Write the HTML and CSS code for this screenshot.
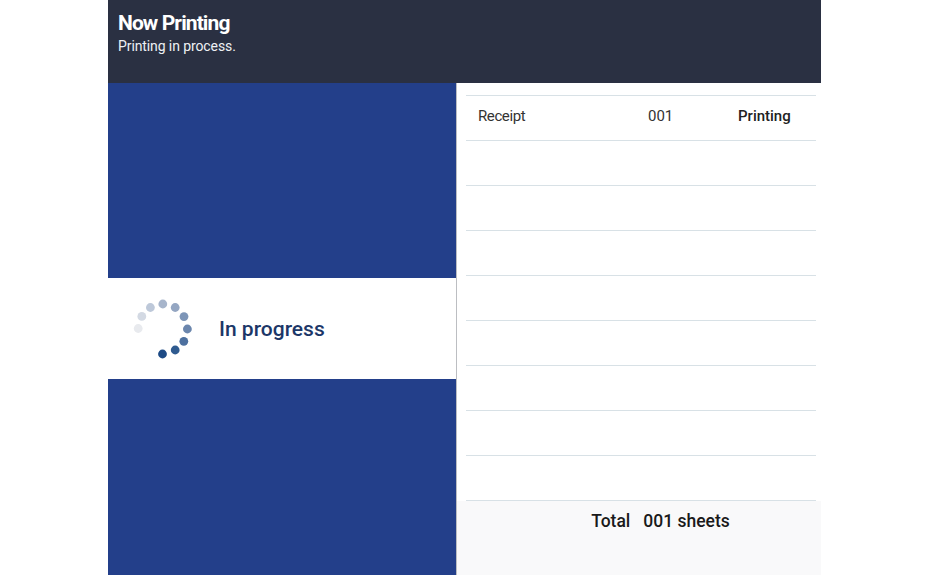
FILE: index.html
```html
<!DOCTYPE html>
<html lang="en">
<head>
    <meta charset="UTF-8">
    <title>Now Printing</title>
    <link rel="stylesheet" href="styles.css">
</head>
<body>
    <div class="screen">
        <div class="header">
            <h1>Now Printing</h1>
            <p>Printing in process.</p>
        </div>
        <div class="main">
            <div class="status-panel">
                <div class="status-band">
                    <svg class="spinner" width="60" height="60" viewBox="0 0 60 60">
                        <circle cx="29.5" cy="55" r="4.4" fill="#1d4a85"/>
                        <circle cx="42.2" cy="51" r="4.4" fill="#2f5b90"/>
                        <circle cx="50.8" cy="42.3" r="4.4" fill="#4d709f"/>
                        <circle cx="54.4" cy="30" r="4.4" fill="#6b86ad"/>
                        <circle cx="51" cy="17.6" r="4.4" fill="#7d95b7"/>
                        <circle cx="42.2" cy="8.5" r="4.4" fill="#94a6c2"/>
                        <circle cx="29.8" cy="5" r="4.4" fill="#a7b5cb"/>
                        <circle cx="17.4" cy="8.5" r="4.4" fill="#bdc8d9"/>
                        <circle cx="8.8" cy="17.4" r="4.4" fill="#d3d9e3"/>
                        <circle cx="5.2" cy="29.5" r="4.4" fill="#e8eaee"/>
                    </svg>
                    <span class="status-text">In progress</span>
                </div>
            </div>
            <div class="job-panel">
                <div class="job-list">
                    <div class="job-row">
                        <span class="job-name">Receipt</span>
                        <span class="job-count">001</span>
                        <span class="job-state">Printing</span>
                    </div>
                    <div class="job-row"></div>
                    <div class="job-row"></div>
                    <div class="job-row"></div>
                    <div class="job-row"></div>
                    <div class="job-row"></div>
                    <div class="job-row"></div>
                    <div class="job-row"></div>
                    <div class="job-row"></div>
                </div>
                <div class="total">
                    <span>Total</span>
                    <span>001 sheets</span>
                </div>
            </div>
        </div>
    </div>
</body>
</html>
```

FILE: styles.css
```css
html, body {
    margin: 0;
    padding: 0;
    height: 100%;
    background-color: white;
    font-family: Roboto, "Liberation Sans", sans-serif;
    overflow: hidden;
}

.screen {
    display: flex;
    flex-direction: column;
    width: 713px;
    height: 575px;
    margin-left: 108px;
}

.header {
    height: 83px;
    box-sizing: border-box;
    padding: 10px 10px 0;
    background-color: #2a3042;
    color: white;
}

.header h1 {
    margin: 0;
    font-size: 21px;
    line-height: 26px;
    font-weight: 700;
    letter-spacing: -0.9px;
}

.header p {
    margin: 0;
    font-size: 14px;
    line-height: 20px;
    letter-spacing: -0.1px;
    color: #eef0f4;
}

.main {
    display: flex;
    flex: 1;
}

.status-panel {
    display: flex;
    align-items: center;
    width: 348px;
    padding-bottom: 2px;
    background-color: #233f8a;
}

.status-band {
    display: flex;
    align-items: center;
    gap: 26px;
    box-sizing: border-box;
    width: 100%;
    height: 101px;
    padding: 2px 0 0 25px;
    background-color: white;
}

.spinner {
    flex-shrink: 0;
}

.status-text {
    font-size: 21px;
    font-weight: 500;
    color: #1c3768;
}

.job-panel {
    display: flex;
    flex-direction: column;
    flex: 1;
    border-left: 1px solid #bcbec2;
}

.job-list {
    padding: 12px 5px 0 9px;
}

.job-row {
    display: flex;
    align-items: center;
    height: 40px;
    padding: 0 0 4px 12px;
    border-top: 1px solid #d8e1e6;
    font-size: 15px;
    color: #333;
}

.job-row:last-child {
    border-bottom: 1px solid #d8e1e6;
}

.job-name {
    width: 170px;
    letter-spacing: -0.4px;
}

.job-count {
    width: 90px;
}

.job-state {
    font-weight: 500;
    color: #222;
}

.total {
    display: flex;
    justify-content: center;
    gap: 13px;
    flex: 1;
    padding: 10px 0 0 43px;
    background-color: #f9f9fa;
    font-size: 17.5px;
    font-weight: 500;
    color: #1a1a1a;
}
```
